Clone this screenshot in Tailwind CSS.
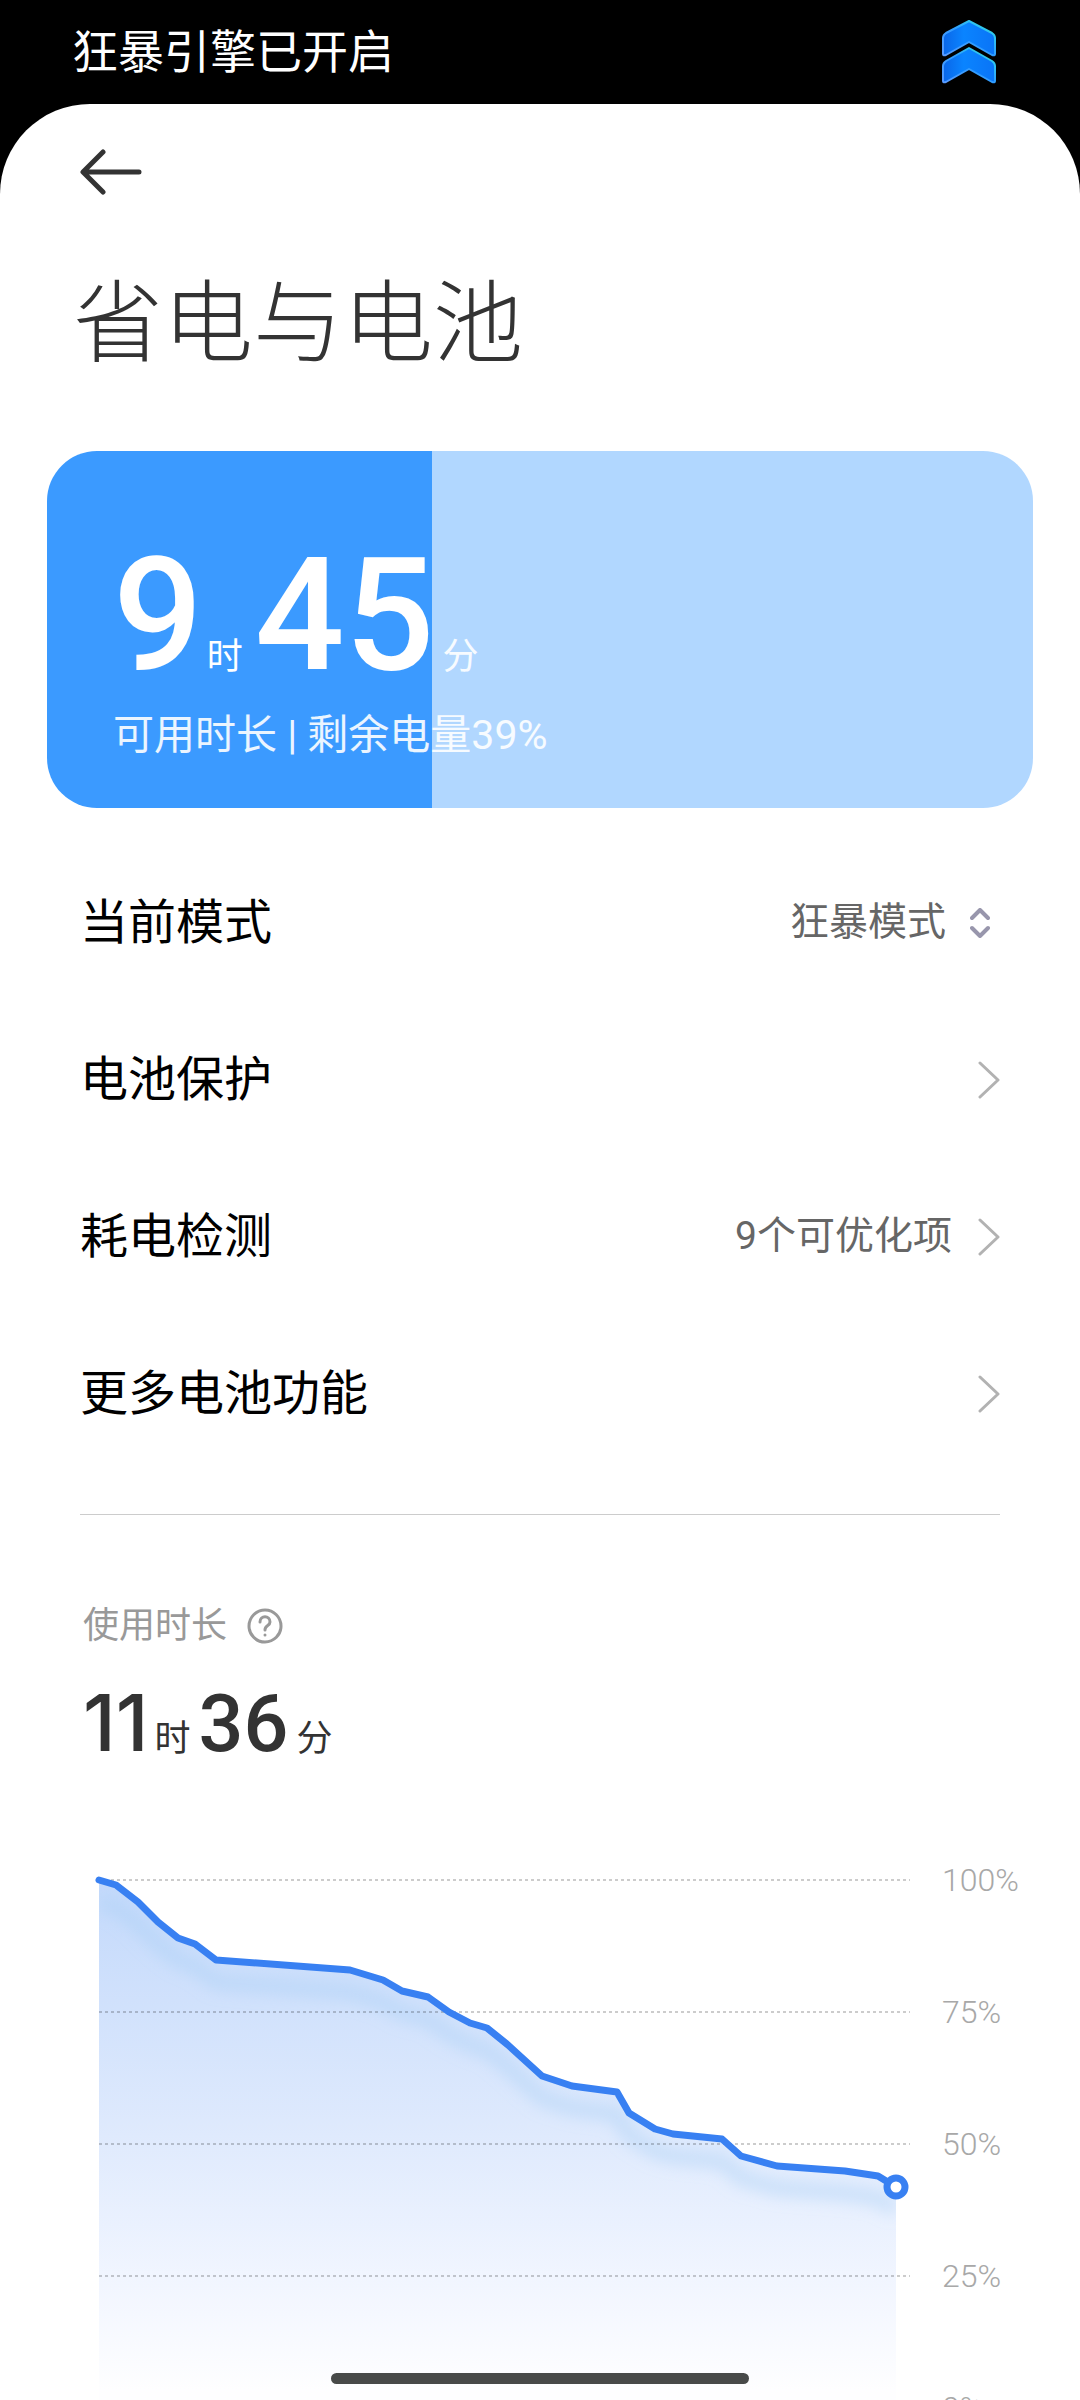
<!DOCTYPE html>
<html lang="zh-CN">
<head>
    <meta charset="UTF-8">
    <meta name="viewport" content="width=device-width, initial-scale=1.0">
    <title>省电与电池</title>
    <script src="https://cdn.jsdelivr.net/npm/@tailwindcss/browser@4"></script>
</head>
<body class="bg-black h-screen flex flex-col overflow-hidden font-['Roboto','Noto_Sans_CJK_SC',sans-serif]">
    <header class="h-[104px] shrink-0 flex items-center justify-between pl-[72px] pr-[84px] text-white">
        <p class="text-[46px] leading-[56px]">狂暴引擎已开启</p>
        <svg class="w-[54px] h-[64px]" viewBox="0 0 54 64" fill="url(#boost)" stroke="url(#boostEdge)" stroke-width="2" stroke-linejoin="round" aria-hidden="true">
            <defs>
                <linearGradient id="boost" x1="0" x2="1" y1="0" y2="0">
                    <stop offset="0" stop-color="#0a66e8"/>
                    <stop offset="0.4" stop-color="#0a84ff"/>
                    <stop offset="1" stop-color="#0a74f6"/>
                </linearGradient>
                <linearGradient id="boostEdge" x1="0" x2="1" y1="1" y2="0">
                    <stop offset="0" stop-color="#5a9bff"/>
                    <stop offset="0.5" stop-color="#2f9dff"/>
                    <stop offset="1" stop-color="#2fe6e0"/>
                </linearGradient>
            </defs>
            <path d="M27 1 L50 13 Q53 15 53 18 V34 Q53 36 50 35 L27 22 L4 35 Q1 36 1 34 V18 Q1 15 4 13 Z"/>
            <path d="M27 28 L50 41 Q53 43 53 46 V61 Q53 63 50 62 L27 49 L4 62 Q1 63 1 61 V46 Q1 43 4 41 Z"/>
        </svg>
    </header>

    <main class="flex-1 min-h-0 overflow-y-auto [scrollbar-width:none] bg-white rounded-t-[90px] text-[#333]">
        <div class="h-[136px] flex items-center px-20">
            <button type="button" aria-label="返回">
                <svg class="w-[62px] h-[46px]" viewBox="0 0 62 46" fill="none" stroke="#333" stroke-width="5" stroke-linecap="round" stroke-linejoin="round">
                    <path d="M23 3 L3 23 L23 43 M4 23 H59"/>
                </svg>
            </button>
        </div>
        <h1 class="mt-10 px-[73px] text-[90px] leading-[90px] font-light">省电与电池</h1>

        <section class="mt-[81px] mx-[47px] h-[357px] rounded-[50px] overflow-hidden bg-[linear-gradient(to_right,#3b9aff_39%,#b1d7ff_39%)] pl-[66px] pt-[84px] text-white">
            <p class="flex items-baseline">
                <span class="text-[158px] leading-[160px] font-medium">9</span>
                <span class="ml-1 mr-3 text-[36px] leading-none">时</span>
                <span class="text-[158px] leading-[160px] font-medium">45</span>
                <span class="ml-2 text-[36px] leading-none text-white/90">分</span>
            </p>
            <p class="mt-3 text-[41px] leading-[56px] text-white/90">可用时长 | 剩余电量39%</p>
        </section>

        <ul class="mt-9 px-20 text-[48px] text-black">
            <li class="h-[157px] flex items-center justify-between">
                <label for="mode">当前模式</label>
                <span class="flex items-center gap-6 pr-[10px]">
                    <select id="mode" class="appearance-none bg-transparent text-[39px] text-[#666] text-right">
                        <option>狂暴模式</option>
                    </select>
                    <svg class="w-5 h-[30px]" viewBox="0 0 20 30" fill="none" stroke="#9896ac" stroke-width="4" stroke-linecap="round" stroke-linejoin="round" aria-hidden="true">
                        <path d="M2 10 L10 2 L18 10 M2 20 L10 28 L18 20"/>
                    </svg>
                </span>
            </li>
            <li>
                <a href="#protect" class="h-[157px] flex items-center justify-between">
                    电池保护
                    <svg class="w-[22px] h-[38px]" viewBox="0 0 22 38" fill="none" stroke="#b2b2b2" stroke-width="3" stroke-linecap="round" stroke-linejoin="round" aria-hidden="true">
                        <path d="M2 2 L20 19 L2 36"/>
                    </svg>
                </a>
            </li>
            <li>
                <a href="#check" class="h-[157px] flex items-center justify-between">
                    耗电检测
                    <span class="flex items-center gap-[26px] text-[39px] text-[#666]">
                        9个可优化项
                        <svg class="w-[22px] h-[38px]" viewBox="0 0 22 38" fill="none" stroke="#b2b2b2" stroke-width="3" stroke-linecap="round" stroke-linejoin="round" aria-hidden="true">
                            <path d="M2 2 L20 19 L2 36"/>
                        </svg>
                    </span>
                </a>
            </li>
            <li>
                <a href="#more" class="h-[157px] flex items-center justify-between">
                    更多电池功能
                    <svg class="w-[22px] h-[38px]" viewBox="0 0 22 38" fill="none" stroke="#b2b2b2" stroke-width="3" stroke-linecap="round" stroke-linejoin="round" aria-hidden="true">
                        <path d="M2 2 L20 19 L2 36"/>
                    </svg>
                </a>
            </li>
        </ul>

        <hr class="mt-[42px] mx-20 border-t border-[#ccc]">

        <section class="pt-[84px] pl-[83px]">
            <div class="flex items-center gap-5 text-[36px] leading-[54px] text-[#999]">
                <h2>使用时长</h2>
                <button type="button" aria-label="说明">
                    <svg class="w-9 h-9" viewBox="0 0 36 36" fill="none" stroke="#999" stroke-width="3" stroke-linecap="round">
                        <circle cx="18" cy="18" r="16"/>
                        <path d="M13 14 C13 7 23 7 23 14 C23 18 18 17 18 22"/>
                        <path d="M18 27 V27"/>
                    </svg>
                </button>
            </div>
            <p class="mt-6 flex items-baseline">
                <span class="text-[79px] leading-[90px] font-medium font-['Inter']">11</span>
                <span class="ml-1.5 mr-2 text-[36px] leading-none">时</span>
                <span class="text-[79px] leading-[90px] font-medium">36</span>
                <span class="ml-2 text-[36px] leading-none">分</span>
            </p>

            <div class="mt-[111px] pl-4 flex gap-8">
                <svg class="flex-1 min-w-0 overflow-visible" viewBox="0 0 811 528" fill="none" role="img" aria-label="电量曲线">
                    <defs>
                        <linearGradient id="area" gradientUnits="userSpaceOnUse" x1="0" x2="0" y1="0" y2="510">
                            <stop offset="0" stop-color="#c3d9fb"/>
                            <stop offset="0.5" stop-color="#dfeafd"/>
                            <stop offset="0.8" stop-color="#f2f6ff"/>
                            <stop offset="1" stop-color="#fefeff"/>
                        </linearGradient>
                        <filter id="soft" x="-10%" y="-20%" width="120%" height="140%">
                            <feGaussianBlur stdDeviation="8"/>
                        </filter>
                        <clipPath id="under">
                            <path d="M0 0 L17 5 39 22 59 42 79 58 96 64 117 80 251 90 284 100 303 111 329 117 350 132 371 143 388 148 409 165 443 196 473 206 518 212 530 233 556 249 574 254 623 259 642 276 678 286 746 291 779 296 797 307 V528 H0 Z"/>
                        </clipPath>
                    </defs>
                    <g clip-path="url(#under)">
                        <rect width="811" height="528" fill="url(#area)"/>
                        <path transform="translate(0 22)" filter="url(#soft)" stroke="#a9cff5" stroke-opacity="0.5" stroke-width="14" d="M0 0 L17 5 39 22 59 42 79 58 96 64 117 80 251 90 284 100 303 111 329 117 350 132 371 143 388 148 409 165 443 196 473 206 518 212 530 233 556 249 574 254 623 259 642 276 678 286 746 291 779 296 797 307"/>
                    </g>
                    <path stroke="#000" stroke-opacity="0.2" stroke-width="2" stroke-dasharray="3 3" d="M0 0 H811 M0 132 H811 M0 264 H811 M0 396 H811 M0 528 H811"/>
                    <path stroke="#3880f2" stroke-width="7" stroke-linecap="round" stroke-linejoin="round" d="M0 0 L17 5 39 22 59 42 79 58 96 64 117 80 251 90 284 100 303 111 329 117 350 132 371 143 388 148 409 165 443 196 473 206 518 212 530 233 556 249 574 254 623 259 642 276 678 286 746 291 779 296 797 307"/>
                    <circle cx="797" cy="307" r="9" fill="#fff" stroke="#3880f2" stroke-width="7"/>
                </svg>
                <div class="w-[138px] -my-5 flex flex-col justify-between text-[32px] leading-10 font-light text-[#a8a8a8]">
                    <span>100%</span>
                    <span>75%</span>
                    <span>50%</span>
                    <span>25%</span>
                    <span>0%</span>
                </div>
            </div>
        </section>
    </main>

    <div class="fixed bottom-4 left-1/2 -translate-x-1/2 w-[418px] h-[11px] rounded-full bg-[#484a49]"></div>
</body>
</html>
